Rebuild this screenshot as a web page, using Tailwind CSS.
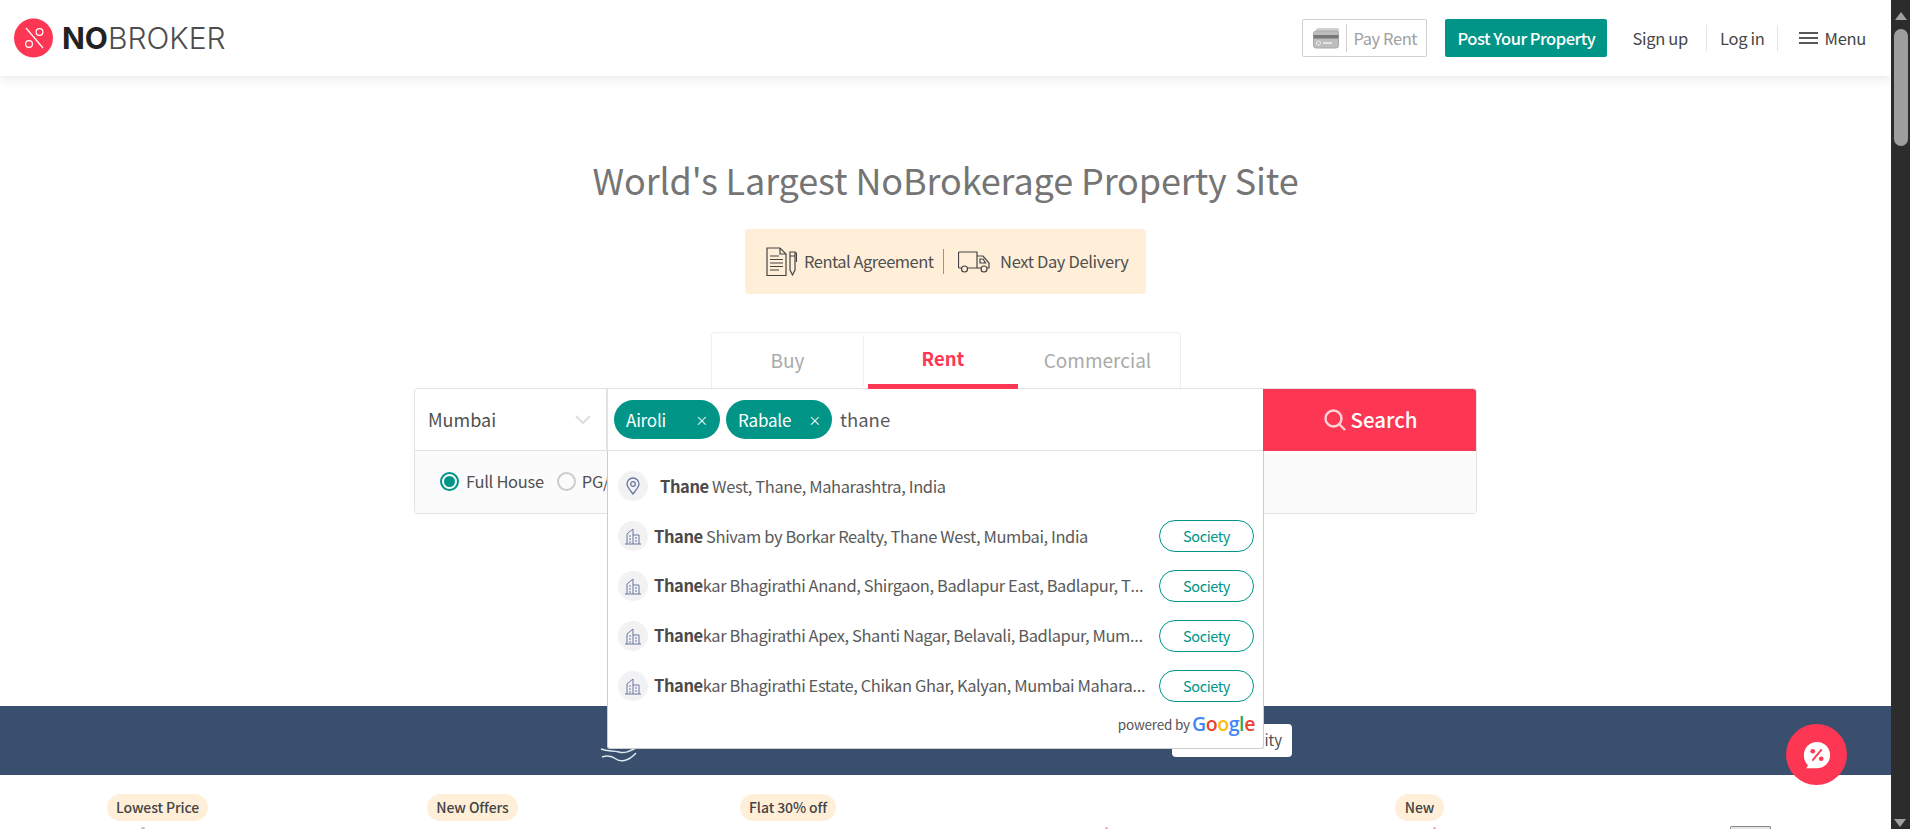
<!DOCTYPE html>
<html><head><meta charset="utf-8"><script src="https://cdn.jsdelivr.net/npm/@tailwindcss/browser@4"></script><title>NoBroker</title></head>
<body class="bg-white">
<div class="flex h-[829px] w-[1910px] overflow-hidden font-['Noto_Sans_CJK_KR','Noto_Sans',sans-serif] text-[#464646]">
  <div class="relative w-[1891px] shrink-0 overflow-hidden">
    <header class="relative z-10 flex h-[76px] items-center bg-white pl-[14px] pr-[25px] shadow-[0_2px_12px_rgba(0,0,0,0.1)]">
      <svg class="h-10 w-10 shrink-0" viewBox="0 0 40 40"><circle cx="19.5" cy="20" r="19.5" fill="#fd3753"/><path d="M12 10 L29 30" stroke="#fff" stroke-width="1.2"/><circle cx="25.5" cy="14" r="3.4" fill="none" stroke="#fff" stroke-width="1.2"/><circle cx="15" cy="26" r="3.4" fill="none" stroke="#fff" stroke-width="1.2"/></svg>
      <div class="ml-2 font-['Inter',sans-serif] text-[30px] leading-none text-[#4d4d4d] font-light"><span class="font-bold text-[#222]">NO</span>BROKER</div>
      <div class="ml-auto flex items-center text-[16.5px] tracking-[-0.3px]">
        <div class="flex h-[38px] w-[125px] items-center rounded-[2px] border border-[#cfcfcf] pl-[10px]">
          <svg class="h-[22px] w-[27px]" viewBox="0 0 27 22"><rect x="3" y="1" width="23" height="15" rx="2" fill="#d0d0d0"/><rect x="0.5" y="4" width="25" height="17" rx="2.5" fill="#bdbdbd" stroke="#aaa"/><rect x="0.5" y="8" width="25" height="3.5" fill="#777"/><circle cx="5.5" cy="16" r="2" fill="none" stroke="#eee"/><rect x="10" y="15" width="9" height="2" fill="#e5e5e5"/></svg>
          <span class="ml-[6px] h-[28px] w-px bg-[#cfcfcf]"></span>
          <span class="ml-[6px] tracking-[-0.4px] text-[#a0a0a0]">Pay Rent</span>
        </div>
        <button class="ml-[18px] h-[38px] w-[162px] rounded-[2px] bg-[#009587] text-[16.5px] font-medium tracking-[-0.5px] text-white">Post Your Property</button>
        <span class="ml-[25px]">Sign up</span>
        <span class="ml-[18px] h-[26px] w-px bg-[#e5e5e5]"></span>
        <span class="ml-[13px]">Log in</span>
        <span class="ml-[12px] h-[26px] w-px bg-[#e5e5e5]"></span>
        <svg class="ml-[21px] h-[14px] w-[19px]" viewBox="0 0 19 14"><path d="M0 2h19M0 7h19M0 12h19" stroke="#222" stroke-width="1.5"/></svg>
        <span class="ml-[7px]">Menu</span>
      </div>
    </header>

    <h1 class="mt-[76px] text-center text-[36px] leading-[54px] tracking-[-0.12px] text-[#757575]">World's Largest NoBrokerage Property Site</h1>

    <div class="mx-auto mt-[23px] flex h-[65px] w-[401px] items-center whitespace-nowrap rounded-[3px] bg-[#ffefd9] pl-[21px] text-[16.5px] tracking-[-0.5px] text-[#505050]">
      <svg class="h-[30px] w-[31px] shrink-0" viewBox="0 0 31 30" fill="none" stroke="#444" stroke-width="1.2"><path d="M1 1h13l6 6v21.500H1z"/><path d="M14 1v6h6M4 9h9M4 12.500h13M4 16h13M4 19.500h13M4 23h9"/><path d="M24 5h5v18l-2.500 5-2.500-5z"/><path d="M24 9h5M29 6h1.500v9"/></svg>
      <span class="ml-[7px]">Rental Agreement</span>
      <span class="ml-[9px] h-[25px] w-[1.5px] bg-[#9a9488]"></span>
      <svg class="ml-[14px] h-[22px] w-[32px] shrink-0" viewBox="0 0 32 22" fill="none" stroke="#444" stroke-width="1.2"><path d="M4 17H1.500a1 1 0 0 1-1-1V2a1 1 0 0 1 1-1H19v16H9"/><path d="M19 5h6l6 7v5h-2M23 17h-4"/><path d="M22 8h3l2.500 4H22z"/><circle cx="6.500" cy="18" r="3"/><circle cx="26" cy="18" r="3"/></svg>
      <span class="ml-[10px] tracking-[-0.35px]">Next Day Delivery</span>
    </div>

    <div class="mx-auto mt-[38px] flex h-[57px] w-[470px] rounded-t-[4px] border border-b-0 border-[#eeeeee] text-[19px] text-[#aaaaaa]">
      <div class="flex w-[151px] items-center justify-center pl-[1px]"><span class="-mt-[1px]">Buy</span></div>
      <div class="my-[3px] w-px bg-[#eeeeee]"></div>
      <div class="relative flex w-[159px] items-center justify-center text-[18.5px] font-semibold text-[#fd3753]"><span class="-mt-[4px]">Rent</span><span class="absolute bottom-0 left-[4px] h-[5px] w-[150px] bg-[#fd3753]"></span></div>
      <div class="flex flex-1 items-center justify-center pr-[7px]"><span class="-mt-[1px]">Commercial</span></div>
    </div>

    <div class="mx-auto w-[1063px] overflow-hidden rounded-[4px] border border-[#e2e2e2] -mt-px">
      <div class="flex h-[62px] border-b border-[#e2e2e2]">
        <div class="flex w-[193px] items-center justify-between border-r-2 border-[#e2e2e2] pl-[13px] pr-[15px] text-[18px] text-[#4f4f4f]">Mumbai
          <svg class="h-[10px] w-[16px]" viewBox="0 0 16 10" fill="none" stroke="#ddd" stroke-width="2"><path d="M1 1l7 7 7-7"/></svg></div>
        <div class="flex flex-1 items-center pl-[6px] text-[18.5px] text-[#5a5a5a]">
          <div class="flex h-[39px] w-[106px] items-center justify-between rounded-full bg-[#009587] pl-[12px] pr-[12px] text-[17px] tracking-[-0.2px] text-white">Airoli<span class="text-[13px]">×</span></div>
          <div class="ml-[6px] flex h-[39px] w-[106px] items-center justify-between rounded-full bg-[#009587] pl-[12px] pr-[11px] text-[17px] tracking-[-0.2px] text-white">Rabale<span class="text-[13px]">×</span></div>
          <span class="ml-[8px]">thane</span>
        </div>
        <button class="-mr-px -mt-px flex h-[63px] w-[214px] items-center justify-center gap-[4px] bg-[#fd3753] pl-[2px] text-[20.5px] font-medium text-white">
          <svg class="h-[22px] w-[22px]" viewBox="0 0 22 22" fill="none" stroke="#ffd3da" stroke-width="2.400"><circle cx="9.500" cy="9.500" r="8"/><path d="M15 15l6 6"/></svg>Search</button>
      </div>
      <div class="flex h-[62px] items-center bg-[#fbfbfb] pb-[2px] pl-[25px] text-[16.5px] tracking-[-0.3px] text-[#505050]">
        <span class="flex h-[19px] w-[19px] items-center justify-center rounded-full border-2 border-[#009587]"><span class="h-[11px] w-[11px] rounded-full bg-[#009587]"></span></span>
        <span class="ml-[7px]">Full House</span>
        <span class="ml-[13px] h-[19px] w-[19px] rounded-full border-2 border-[#cccccc]"></span>
        <span class="ml-[6px]">PG/Hostel</span>
      </div>
    </div>

    <section class="relative mt-[192px] flex h-[69px] items-center justify-center bg-[#394f6d]">
      <svg class="absolute left-[600px] top-[34px] h-[28px] w-[42px]" viewBox="0 0 42 28" fill="none" stroke="#dfe6ee" stroke-width="1.500"><path d="M8 2c4-2 7-1 9 0M1 9c7 3 12 1 18 3s11-1 21-6M2 17c6-2 10-1 14 2s12 3 20-6"/></svg>
      <div class="absolute left-[1172px] top-[18px] flex h-[33px] w-[120px] items-center justify-end rounded-[4px] bg-white pr-[10px] text-[15px] text-[#505050]">Quality</div>
    </section>

    <div class="flex px-[107px] pt-[19px] text-[14px] font-medium tracking-[-0.1px] text-[#444]">
      <span class="flex h-[27px] w-[101px] items-center justify-center rounded-full bg-[#ffefd9]">Lowest Price</span>
      <span class="ml-[219px] flex h-[27px] w-[91px] items-center justify-center rounded-full bg-[#ffefd9]">New Offers</span>
      <span class="ml-[222px] flex h-[27px] w-[96px] items-center justify-center rounded-full bg-[#ffefd9]">Flat 30% off</span>
      <span class="ml-[559px] flex h-[27px] w-[49px] items-center justify-center rounded-full bg-[#ffefd9]">New</span>
    </div>
    <span class="absolute left-[141px] top-[827px] h-[2px] w-[4px] rounded-t-full bg-[#bbbbbb]"></span>
    <span class="absolute left-[1105px] top-[827px] h-[2px] w-[3px] rounded-t-full bg-[#fd9aa8]"></span>
    <span class="absolute left-[1433px] top-[827px] h-[2px] w-[3px] rounded-t-full bg-[#fd9aa8]"></span>
    <span class="absolute left-[1730px] top-[826px] h-[3px] w-[41px] rounded-t-[2px] border-x border-t border-[#888888] bg-[#e5e5e5]"></span>

    <div class="absolute left-[607px] top-[451px] z-20 h-[298px] w-[657px] rounded-b-[3px] border-x border-b border-[#cccccc] bg-white text-[16.5px] tracking-[-0.4px] text-[#5a5a5a]">
      <div class="ml-[10px] mt-[20px] flex h-[30px] items-center">
        <span class="flex h-[30px] w-[30px] items-center justify-center rounded-full bg-[#f2f2f4]"><svg class="h-[18px] w-[14px]" viewBox="0 0 14 18" fill="none" stroke="#68779a" stroke-width="1.300"><path d="M7 17C3 12 1 9.500 1 7a6 6 0 0 1 12 0c0 2.500-2 5-6 10z"/><circle cx="7" cy="7" r="2.300"/></svg></span>
        <span class="ml-[12px]"><b class="font-bold text-[#4a4a4a]">Thane</b> West, Thane, Maharashtra, India</span>
      </div>
      <div class="mt-[19px] flex h-[32px] items-center pl-[10px] pr-[9px]">
        <span class="flex h-[30px] w-[30px] shrink-0 items-center justify-center rounded-full bg-[#f2f2f4]"><svg class="h-[18px] w-[18px]" viewBox="0 0 18 18" fill="none" stroke="#68779a" stroke-width="1"><path d="M1 17h16M3 17V7l6-5v15M9 8h6v9M5 9h2M5 12h2M5 15h2M11 11h2M11 14h2"/></svg></span>
        <span class="ml-[6px] min-w-0 flex-1 whitespace-nowrap"><b class="font-bold text-[#4a4a4a]">Thane</b> Shivam by Borkar Realty, Thane West, Mumbai, India</span>
        <span class="ml-[12px] flex h-[32px] w-[95px] shrink-0 items-center justify-center rounded-full border border-[#009587] text-[14.5px] text-[#009587]">Society</span>
      </div>
      <div class="mt-[18px] flex h-[32px] items-center pl-[10px] pr-[9px]">
        <span class="flex h-[30px] w-[30px] shrink-0 items-center justify-center rounded-full bg-[#f2f2f4]"><svg class="h-[18px] w-[18px]" viewBox="0 0 18 18" fill="none" stroke="#68779a" stroke-width="1"><path d="M1 17h16M3 17V7l6-5v15M9 8h6v9M5 9h2M5 12h2M5 15h2M11 11h2M11 14h2"/></svg></span>
        <span class="ml-[6px] min-w-0 flex-1 whitespace-nowrap"><b class="font-bold text-[#4a4a4a]">Thane</b>kar Bhagirathi Anand, Shirgaon, Badlapur East, Badlapur, T<span class="font-['Noto_Sans',sans-serif]">…</span></span>
        <span class="ml-[12px] flex h-[32px] w-[95px] shrink-0 items-center justify-center rounded-full border border-[#009587] text-[14.5px] text-[#009587]">Society</span>
      </div>
      <div class="mt-[18px] flex h-[32px] items-center pl-[10px] pr-[9px]">
        <span class="flex h-[30px] w-[30px] shrink-0 items-center justify-center rounded-full bg-[#f2f2f4]"><svg class="h-[18px] w-[18px]" viewBox="0 0 18 18" fill="none" stroke="#68779a" stroke-width="1"><path d="M1 17h16M3 17V7l6-5v15M9 8h6v9M5 9h2M5 12h2M5 15h2M11 11h2M11 14h2"/></svg></span>
        <span class="ml-[6px] min-w-0 flex-1 whitespace-nowrap"><b class="font-bold text-[#4a4a4a]">Thane</b>kar Bhagirathi Apex, Shanti Nagar, Belavali, Badlapur, Mum<span class="font-['Noto_Sans',sans-serif]">…</span></span>
        <span class="ml-[12px] flex h-[32px] w-[95px] shrink-0 items-center justify-center rounded-full border border-[#009587] text-[14.5px] text-[#009587]">Society</span>
      </div>
      <div class="mt-[18px] flex h-[32px] items-center pl-[10px] pr-[9px]">
        <span class="flex h-[30px] w-[30px] shrink-0 items-center justify-center rounded-full bg-[#f2f2f4]"><svg class="h-[18px] w-[18px]" viewBox="0 0 18 18" fill="none" stroke="#68779a" stroke-width="1"><path d="M1 17h16M3 17V7l6-5v15M9 8h6v9M5 9h2M5 12h2M5 15h2M11 11h2M11 14h2"/></svg></span>
        <span class="ml-[6px] min-w-0 flex-1 whitespace-nowrap"><b class="font-bold text-[#4a4a4a]">Thane</b>kar Bhagirathi Estate, Chikan Ghar, Kalyan, Mumbai Mahara<span class="font-['Noto_Sans',sans-serif]">…</span></span>
        <span class="ml-[12px] flex h-[32px] w-[95px] shrink-0 items-center justify-center rounded-full border border-[#009587] text-[14.5px] text-[#009587]">Society</span>
      </div>
      <div class="mr-[8px] mt-[12px] flex items-center justify-end text-[13.5px] tracking-[-0.2px] text-[#555]">powered by<span class="ml-[2px] font-['Open_Sans',sans-serif] text-[19.5px] font-semibold leading-none tracking-[-0.4px]"><span class="text-[#4285f4]">G</span><span class="text-[#ea4335]">o</span><span class="text-[#fbbc05]">o</span><span class="text-[#4285f4]">g</span><span class="text-[#34a853]">l</span><span class="text-[#ea4335]">e</span></span></div>
    </div>

    <button class="absolute left-[1786px] top-[724px] z-30 flex h-[61px] w-[61px] items-center justify-center rounded-full bg-[#fd3753]">
      <svg class="h-[30px] w-[30px]" viewBox="0 0 32 32"><path d="M16 2c8 0 14 6 14 14s-6 14-14 14H4.500l2-3C3.500 24.500 2 20.500 2 16 2 8 8 2 16 2z" fill="#fff"/><path d="M11 22l10-12" stroke="#fd3753" stroke-width="2"/><circle cx="11.500" cy="12" r="2.500" fill="#fd3753"/><circle cx="20.500" cy="20" r="2.500" fill="#fd3753"/></svg>
    </button>
  </div>

  <aside class="relative w-[19px] shrink-0 bg-[#2c2c2c]">
    <div class="mx-auto mt-[12px] h-0 w-0 border-x-[6px] border-b-[8px] border-x-transparent border-b-[#a0a0a0]"></div>
    <div class="mx-auto mt-[9px] h-[117px] w-[14px] rounded-[7px] bg-[#9e9e9e]"></div>
    <div class="absolute bottom-[2px] left-[3px] h-0 w-0 border-x-[6px] border-t-[8px] border-x-transparent border-t-[#a0a0a0]"></div>
  </aside>
</div>
</body></html>
